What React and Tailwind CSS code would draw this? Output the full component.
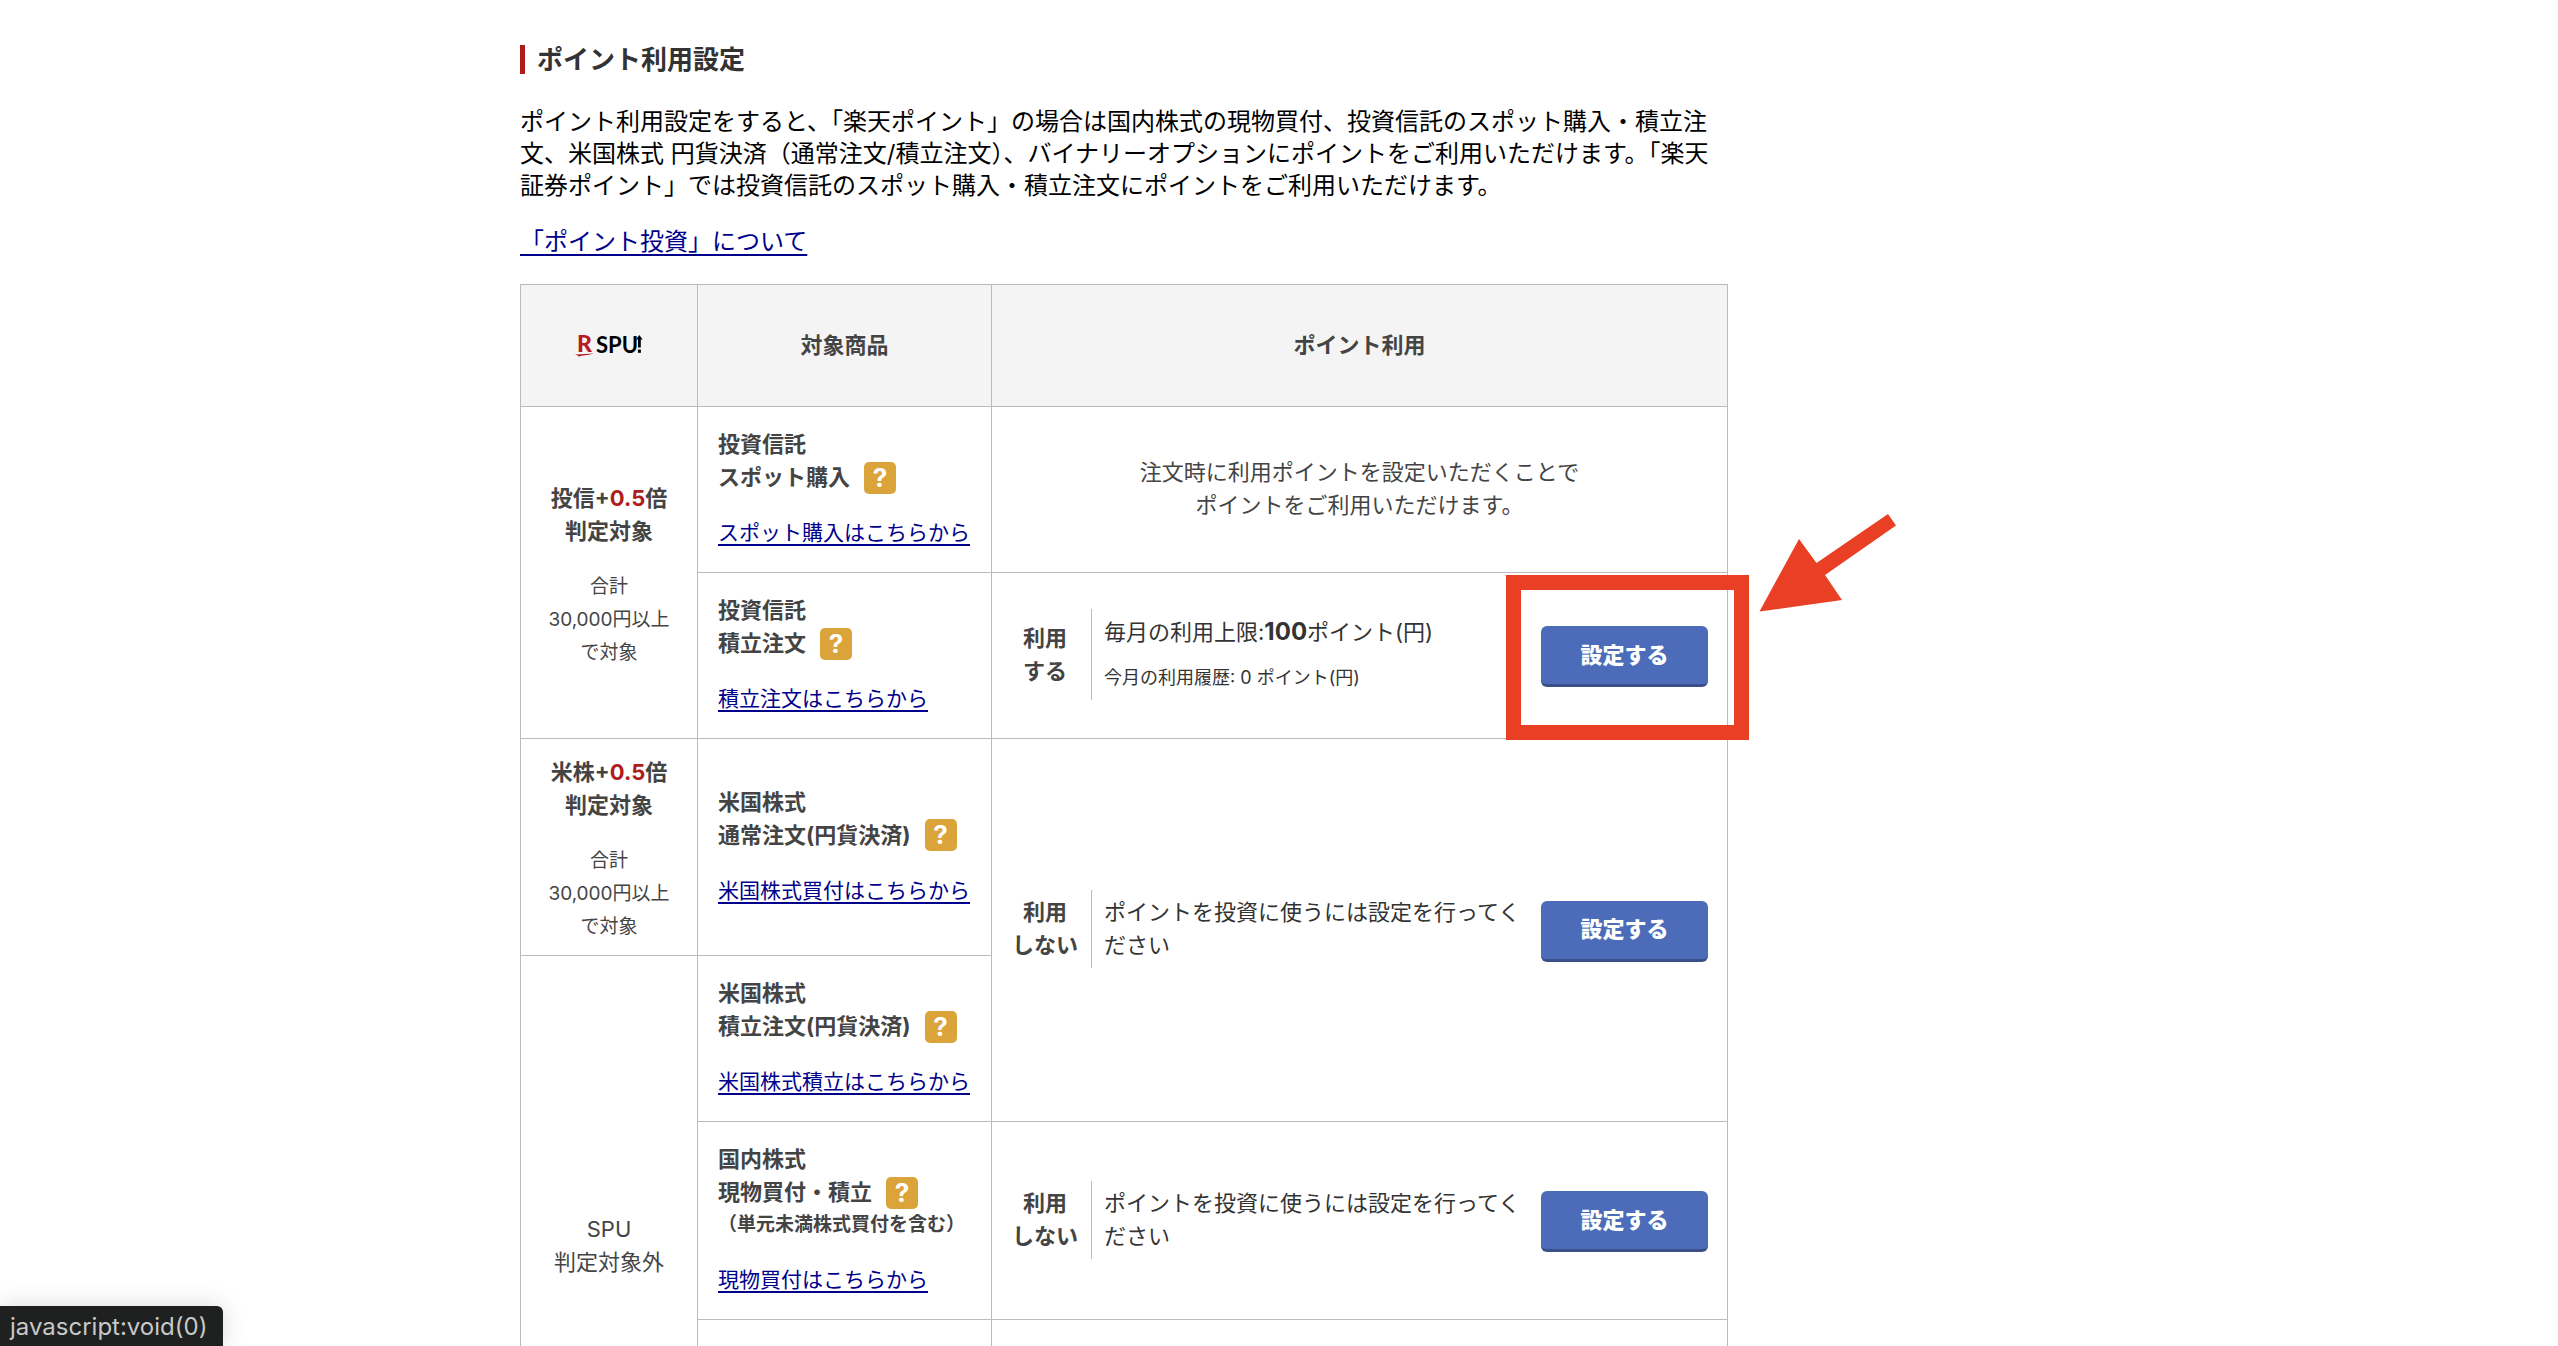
import React from "react";

function SpuLogo() {
  return (
    <svg
      viewBox="0 0 72 40"
      className="mx-auto block h-10 w-[72px]"
      role="img"
      aria-label="R SPU!"
    >
      <text x="4" y="26" fill="#b81c22" fontFamily="Lato, sans-serif" fontWeight="900" fontSize="23">
        R
      </text>
      <path d="M2 28.5 Q12 28 21 27.6 Q16 29.2 10 29.6 Q7 30 6 30.8 Q5.5 29.6 2 28.5 Z" fill="#b81c22" />
      <text x="23" y="27" fill="#000" fontFamily="Lato, sans-serif" fontWeight="700" fontSize="22">
        SPU
      </text>
      <path d="M66.3 9 L69.6 13.4 H67.8 V21.6 H65 V13.4 H63 Z" fill="#000" />
      <rect x="64.9" y="23.6" width="3" height="3.2" fill="#000" />
    </svg>
  );
}

function Link({ children }) {
  return (
    <a
      href="#"
      className="text-[#00008b] underline decoration-2 underline-offset-4 [text-decoration-skip-ink:none]"
    >
      {children}
    </a>
  );
}

function HelpButton() {
  return (
    <button
      type="button"
      aria-label="ヘルプ"
      className="ml-3.5 flex size-8 shrink-0 items-center justify-center rounded-[5px] bg-[#dba43a] text-[26px] leading-8 font-bold text-white"
    >
      ?
    </button>
  );
}

function ProductCell({ category, name, note, link }) {
  return (
    <td className="border border-[#bbb] pt-[21px] pb-[23px] pl-5 align-middle whitespace-nowrap">
      <div className="font-bold">
        <p>{category}</p>
        <div className="flex h-[33px] items-center">
          <span>{name}</span>
          <HelpButton />
        </div>
        {note && <p className="text-[19px] leading-8">{note}</p>}
      </div>
      <p className="mt-[22px] text-[21px]">
        <Link>{link}</Link>
      </p>
    </td>
  );
}

function JudgeCell({ kind }) {
  return (
    <td rowSpan={kind === "投信" ? 2 : 1} className="border border-[#bbb] pt-[17px] pb-3 text-center align-middle">
      <p className="font-bold">
        {kind}+<span className="text-[#b01c1c]">0.5</span>倍<br />
        判定対象
      </p>
      <p className="mt-[22px] text-[19px]">
        合計
        <br />
        30,000円以上
        <br />
        で対象
      </p>
    </td>
  );
}

function Callout() {
  return (
    <>
      <div className="pointer-events-none absolute -top-[51px] -right-[41px] -bottom-[53px] -left-[35px] border-[15px] border-[#e93f25]" />
      <svg
        viewBox="0 0 138 98"
        className="pointer-events-none absolute -top-[112px] left-[218px] h-[98px] w-[138px]"
        aria-hidden="true"
      >
        <polygon
          points="0.5,97.5 40,25 57.5,49 129,0 137,11.5 66,61 83,86"
          fill="#e93f25"
        />
      </svg>
    </>
  );
}

function UsageCell({ status, rowSpan, highlighted, children }) {
  return (
    <td rowSpan={rowSpan} className="border border-[#bbb] pr-[19px] pb-0.5 pl-5 align-middle">
      <div className="flex items-center">
        <p className="w-[66px] shrink-0 text-center font-bold whitespace-nowrap">
          利用
          <br />
          {status}
        </p>
        <div className="mr-3 ml-[13px] flex-1 border-l border-[#bbb] py-1.5 pl-3 text-[#333]">{children}</div>
        <div className="relative mt-1 shrink-0">
          <button
            type="button"
            className="block h-[61px] w-[167px] rounded-md border-b-[3px] border-[#3b5089] bg-[#4c6cb9] font-black text-white"
          >
            設定する
          </button>
          {highlighted && <Callout />}
        </div>
      </div>
    </td>
  );
}

export default function App() {
  return (
    <div className="relative h-screen overflow-hidden bg-white pl-[520px] font-[Inter,'Noto_Sans_CJK_JP',sans-serif] text-black">
      <main className="max-w-[1208px] pt-[45px]">
        <h2 className="border-l-[5px] border-[#b01c1c] pl-3 text-[26px] leading-[29px] font-bold text-[#333]">
          ポイント利用設定
        </h2>
        <p className="mt-8 text-2xl leading-8 whitespace-nowrap">
          ポイント利用設定をすると、「楽天ポイント」の場合は国内株式の現物買付、投資信託のスポット購入・積立注
          <br />
          文、米国株式 円貨決済（通常注文/積立注文）、バイナリーオプションにポイントをご利用いただけます。「楽天
          <br />
          証券ポイント」では投資信託のスポット購入・積立注文にポイントをご利用いただけます。
        </p>
        <p className="mt-6 text-2xl leading-8 [text-spacing-trim:space-all]">
          <Link>「ポイント投資」について</Link>
        </p>

        <table className="mt-[26px] w-full table-fixed border-collapse text-[22px] leading-[33px] text-[#444]">
          <colgroup>
            <col className="w-[177px]" />
            <col className="w-[294px]" />
            <col />
          </colgroup>
          <thead>
            <tr className="bg-[#f4f4f4]">
              <th className="border border-[#bbb] py-10">
                <SpuLogo />
              </th>
              <th className="border border-[#bbb] py-11">対象商品</th>
              <th className="border border-[#bbb] py-11">ポイント利用</th>
            </tr>
          </thead>
          <tbody>
            <tr>
              <JudgeCell kind="投信" />
              <ProductCell category="投資信託" name="スポット購入" link="スポット購入はこちらから" />
              <td className="border border-[#bbb] pb-0.5 text-center align-middle">
                注文時に利用ポイントを設定いただくことで
                <br />
                ポイントをご利用いただけます。
              </td>
            </tr>
            <tr>
              <ProductCell category="投資信託" name="積立注文" link="積立注文はこちらから" />
              <UsageCell status="する" highlighted>
                <p>
                  毎月の利用上限:<b className="text-2xl leading-[33px]">100</b>ポイント(円)
                </p>
                <p className="mt-3 text-lg leading-[33px]">今月の利用履歴: 0 ポイント(円)</p>
              </UsageCell>
            </tr>
            <tr>
              <JudgeCell kind="米株" />
              <ProductCell category="米国株式" name="通常注文(円貨決済)" link="米国株式買付はこちらから" />
              <UsageCell status="しない" rowSpan={2}>
                ポイントを投資に使うには設定を行ってください
              </UsageCell>
            </tr>
            <tr>
              <td rowSpan={3} className="border border-[#bbb] text-center align-middle">
                SPU
                <br />
                判定対象外
              </td>
              <ProductCell category="米国株式" name="積立注文(円貨決済)" link="米国株式積立はこちらから" />
            </tr>
            <tr>
              <ProductCell
                category="国内株式"
                name="現物買付・積立"
                note="（単元未満株式買付を含む）"
                link="現物買付はこちらから"
              />
              <UsageCell status="しない">ポイントを投資に使うには設定を行ってください</UsageCell>
            </tr>
            <tr className="h-[217px]">
              <td className="border border-[#bbb]" />
              <td className="border border-[#bbb]" />
            </tr>
          </tbody>
        </table>
      </main>

      <div className="absolute bottom-0 left-0 rounded-tr-md bg-[#1e2120] pt-0.5 pr-4 pl-[10px] text-2xl leading-[38px] text-[#c8c8c8] shadow-[0_0_24px_rgba(0,0,0,0.15)]">
        javascript:void(0)
      </div>
    </div>
  );
}
